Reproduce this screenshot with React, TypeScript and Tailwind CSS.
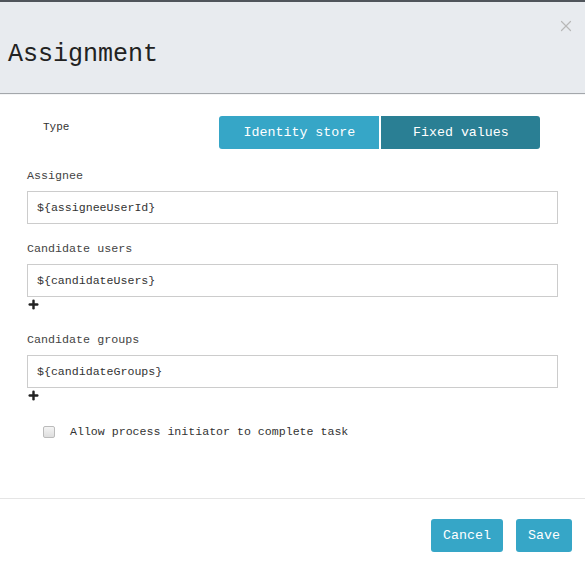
import { Plus, X } from "lucide-react"

const mono = { fontFamily: '"Liberation Mono", "DejaVu Sans Mono", monospace' }

function Field({ label, value, addable }: { label: string; value: string; addable?: boolean }) {
    return (
        <div className="mx-[27px]">
            <label className="block text-[11.7px] leading-[14px] text-[#444]">{label}</label>
            <div className="mt-[8px] h-[33px] w-[531px] border border-[#ccc] bg-white flex items-center px-[9px] text-[11.6px] text-[#333]">
                {value}
            </div>
            {addable && (
                <div className="h-[14px] pt-[1px]">
                    <Plus size={13} strokeWidth={4.5} className="text-[#222]" />
                </div>
            )}
        </div>
    )
}

export default function App() {
    return (
        <div className="w-[585px] h-[567px] bg-white flex flex-col border-t-[2px] border-[#50555b]" style={mono}>
            {/* header */}
            <div className="relative h-[92px] bg-[#e8ebef] border-b border-[#a3a7ab] flex items-center pl-[8px]">
                <h1 className="text-[25px] leading-none text-[#222] mt-[14px]">Assignment</h1>
                <button className="absolute right-[10px] top-[15px] text-[#b8b8b8]">
                    <X size={18} strokeWidth={1.6} />
                </button>
            </div>

            {/* body */}
            <div className="flex-1 border-t border-[#f4f5f6]">
                <div className="flex items-start mt-[21px] h-[33px]">
                    <span className="ml-[43px] mt-[3px] text-[11px] text-[#333]">Type</span>
                    <div className="ml-[150px] flex gap-[2px]">
                        <button className="w-[160px] h-[33px] bg-[#36a6c7] text-white text-[13.3px] rounded-l-[3px]">
                            Identity store
                        </button>
                        <button className="w-[159px] h-[33px] bg-[#2a7f94] text-white text-[13.3px] rounded-r-[3px]">
                            Fixed values
                        </button>
                    </div>
                </div>

                <div className="mt-[20px]">
                    <Field label="Assignee" value="${assigneeUserId}" />
                </div>
                <div className="mt-[18px]">
                    <Field label="Candidate users" value="${candidateUsers}" addable />
                </div>
                <div className="mt-[22px]">
                    <Field label="Candidate groups" value="${candidateGroups}" addable />
                </div>

                <div className="flex items-center mt-[21px] ml-[43px]">
                    <span className="w-[12px] h-[12px] rounded-[2px] border border-[#bbb] bg-gradient-to-b from-[#f4f4f4] to-[#dedede]" />
                    <span className="ml-[15px] text-[11.6px] text-[#333]">Allow process initiator to complete task</span>
                </div>
            </div>

            {/* footer */}
            <div className="h-[69px] border-t border-[#e5e5e5] flex items-start justify-end gap-[13px] pr-[13px] pt-[20px]">
                <button className="w-[72px] h-[33px] bg-[#36a6c7] text-white text-[13.3px] rounded-[3px]">Cancel</button>
                <button className="w-[56px] h-[33px] bg-[#36a6c7] text-white text-[13.3px] rounded-[3px]">Save</button>
            </div>
        </div>
    )
}
